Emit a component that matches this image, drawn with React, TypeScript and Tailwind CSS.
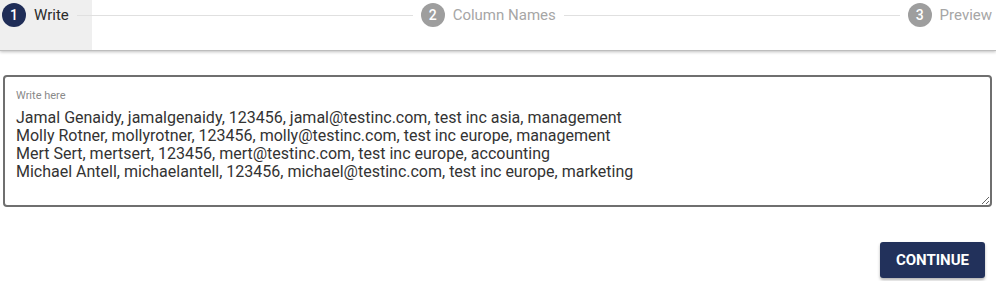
import React from "react";

const rows = [
  "Jamal Genaidy, jamalgenaidy, 123456, jamal@testinc.com, test inc asia, management",
  "Molly Rotner, mollyrotner, 123456, molly@testinc.com, test inc europe, management",
  "Mert Sert, mertsert, 123456, mert@testinc.com, test inc europe, accounting",
  "Michael Antell, michaelantell, 123456, michael@testinc.com, test inc europe, marketing",
];

function Step({ n, label, active }: { n: number; label: string; active?: boolean }) {
  return (
    <div className="flex items-center shrink-0">
      <div
        className={
          "w-[24px] h-[24px] rounded-full flex items-center justify-center text-white text-[14px] font-medium leading-none " +
          (active ? "bg-[#1f2d57]" : "bg-[#9e9e9e]")
        }
      >
        {n}
      </div>
      <span
        className={
          "ml-[8px] text-[15px] leading-[18px] whitespace-nowrap " +
          (active ? "text-[#2b2b2b]" : "text-[#a6a6a6]")
        }
      >
        {label}
      </span>
    </div>
  );
}

function Line() {
  return <div className="flex-1 h-px bg-[#e0e0e0] mx-[8px]" />;
}

export default function App() {
  return (
    <div className="w-[996px] h-[281px] bg-white overflow-hidden" style={{ fontFamily: "Roboto, 'Liberation Sans', sans-serif" }}>
      <div className="h-[51px] border-b border-[#bdbdbd] shadow-[0_1px_3px_rgba(0,0,0,0.25)] bg-[linear-gradient(to_right,#efefef_92px,#ffffff_92px)] flex items-start pt-[3px] pl-[2px] pr-[4px]">
        <div className="flex items-center w-full">
          <Step n={1} label="Write" active />
          <Line />
          <Step n={2} label="Column Names" />
          <Line />
          <Step n={3} label="Preview" />
        </div>
      </div>
      <div className="pl-[3px] pr-[4px] pt-[24px]">
        <div className="relative">
          <span className="absolute left-[13px] top-[14px] text-[11px] leading-[13px] text-[#8a8a8a]">Write here</span>
          <textarea
            className="block w-full h-[132px] border-2 border-[#6f6f6f] rounded-[4px] pt-[32px] px-[11px] text-[16px] leading-[18px] text-[#333333] outline-none resize-y"
            defaultValue={rows.join("\n")}
            style={{ fontFamily: "Roboto, 'Liberation Sans', sans-serif" }}
          />
        </div>
        <div className="flex justify-end mt-[35px] pr-[7px]">
          <button className="h-[36px] px-[16px] bg-[#22315b] text-white text-[15px] font-bold rounded-[3px] shadow-[0_2px_3px_rgba(0,0,0,0.3)] uppercase tracking-normal">
            Continue
          </button>
        </div>
      </div>
    </div>
  );
}
